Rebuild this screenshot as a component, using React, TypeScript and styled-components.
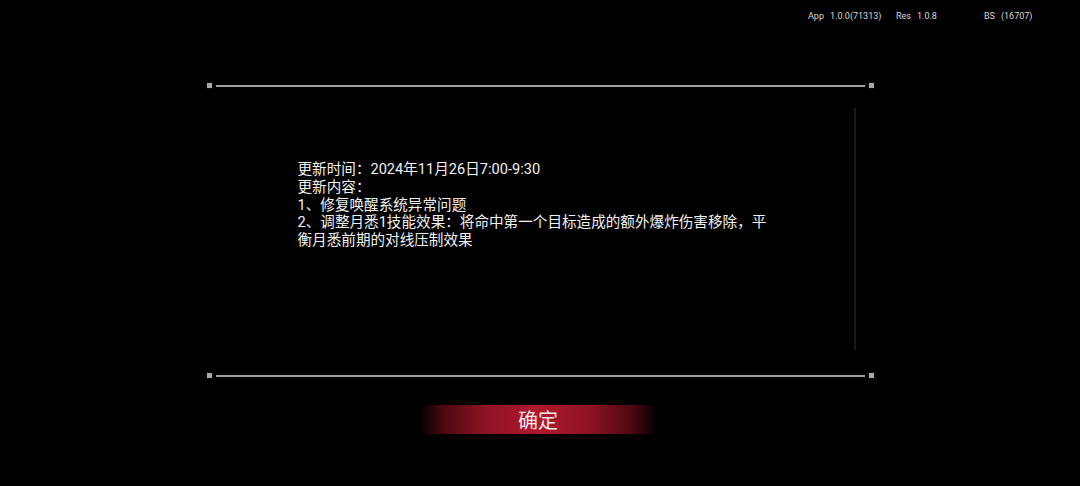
import React from "react";
import styled, { createGlobalStyle } from "styled-components";

const Global = createGlobalStyle`
  html, body { margin: 0; padding: 0; background: #000; }
  body { width: 1080px; height: 486px; overflow: hidden; font-family: "Noto Sans CJK SC", "Noto Sans", sans-serif; }
`;

const Page = styled.div`
  width: 1080px;
  height: 486px;
  background: #000;
  display: flex;
  flex-direction: column;
`;

const Header = styled.div`
  height: 32px;
  display: flex;
  justify-content: flex-end;
  align-items: center;
  padding-right: 8px;
`;

const InfoItem = styled.div`
  width: 88px;
  display: flex;
  gap: 6px;
  font-family: Roboto, "Noto Sans", sans-serif;
  font-size: 9px;
  color: #d8d8d8;
  line-height: 12px;
`;

const Frame = styled.div`
  width: 667px;
  margin: 51px auto 0;
  display: flex;
  flex-direction: column;
`;

const Rule = styled.div`
  display: flex;
  align-items: center;
  gap: 4px;
  height: 5px;
`;

const Knob = styled.div`
  width: 5px;
  height: 5px;
  background: #a8a8a8;
  box-shadow: 0 0 2px 1px #111;
`;

const Line = styled.div`
  flex: 1;
  height: 2px;
  background: #9d9d9d;
`;

const Body = styled.div`
  height: 285px;
  box-sizing: border-box;
  display: flex;
  padding: 20px 18px 23px 91px;
`;

const TextArea = styled.div`
  flex: 1;
  padding-top: 53px;
`;

const Notes = styled.div`
  width: 476px;
  color: #f2f2f2;
  font-family: Roboto, "Noto Sans CJK SC", sans-serif;
  font-size: 14.6px;
  line-height: 17.75px;
`;

const Scrollbar = styled.div`
  width: 2px;
  background: #181818;
`;

const Confirm = styled.button`
  margin: 27px 0 0 419px;
  width: 238px;
  height: 29px;
  border: none;
  padding: 0;
  background: linear-gradient(
    90deg,
    rgba(0, 0, 0, 0) 0%,
    #4a0810 10%,
    #8e1323 28%,
    #b0172b 50%,
    #8e1323 72%,
    #4a0810 90%,
    rgba(0, 0, 0, 0) 100%
  );
  color: #f4e6e6;
  font-family: "Noto Sans CJK SC", sans-serif;
  font-size: 20px;
  line-height: 29px;
  cursor: pointer;
`;

const FrameRule = () => (
  <Rule>
    <Knob />
    <Line />
    <Knob />
  </Rule>
);

export default function App() {
  return (
    <Page>
      <Global />
      <Header>
        <InfoItem>
          <span>App</span>
          <span>1.0.0(71313)</span>
        </InfoItem>
        <InfoItem>
          <span>Res</span>
          <span>1.0.8</span>
        </InfoItem>
        <InfoItem>
          <span>BS</span>
          <span>(16707)</span>
        </InfoItem>
      </Header>
      <Frame>
        <FrameRule />
        <Body>
          <TextArea>
            <Notes>
              更新时间：2024年11月26日7:00-9:30
              <br />
              更新内容：
              <br />
              1、修复唤醒系统异常问题
              <br />
              2、调整月悉1技能效果：将命中第一个目标造成的额外爆炸伤害移除，平衡月悉前期的对线压制效果
            </Notes>
          </TextArea>
          <Scrollbar />
        </Body>
        <FrameRule />
      </Frame>
      <Confirm>确定</Confirm>
    </Page>
  );
}
